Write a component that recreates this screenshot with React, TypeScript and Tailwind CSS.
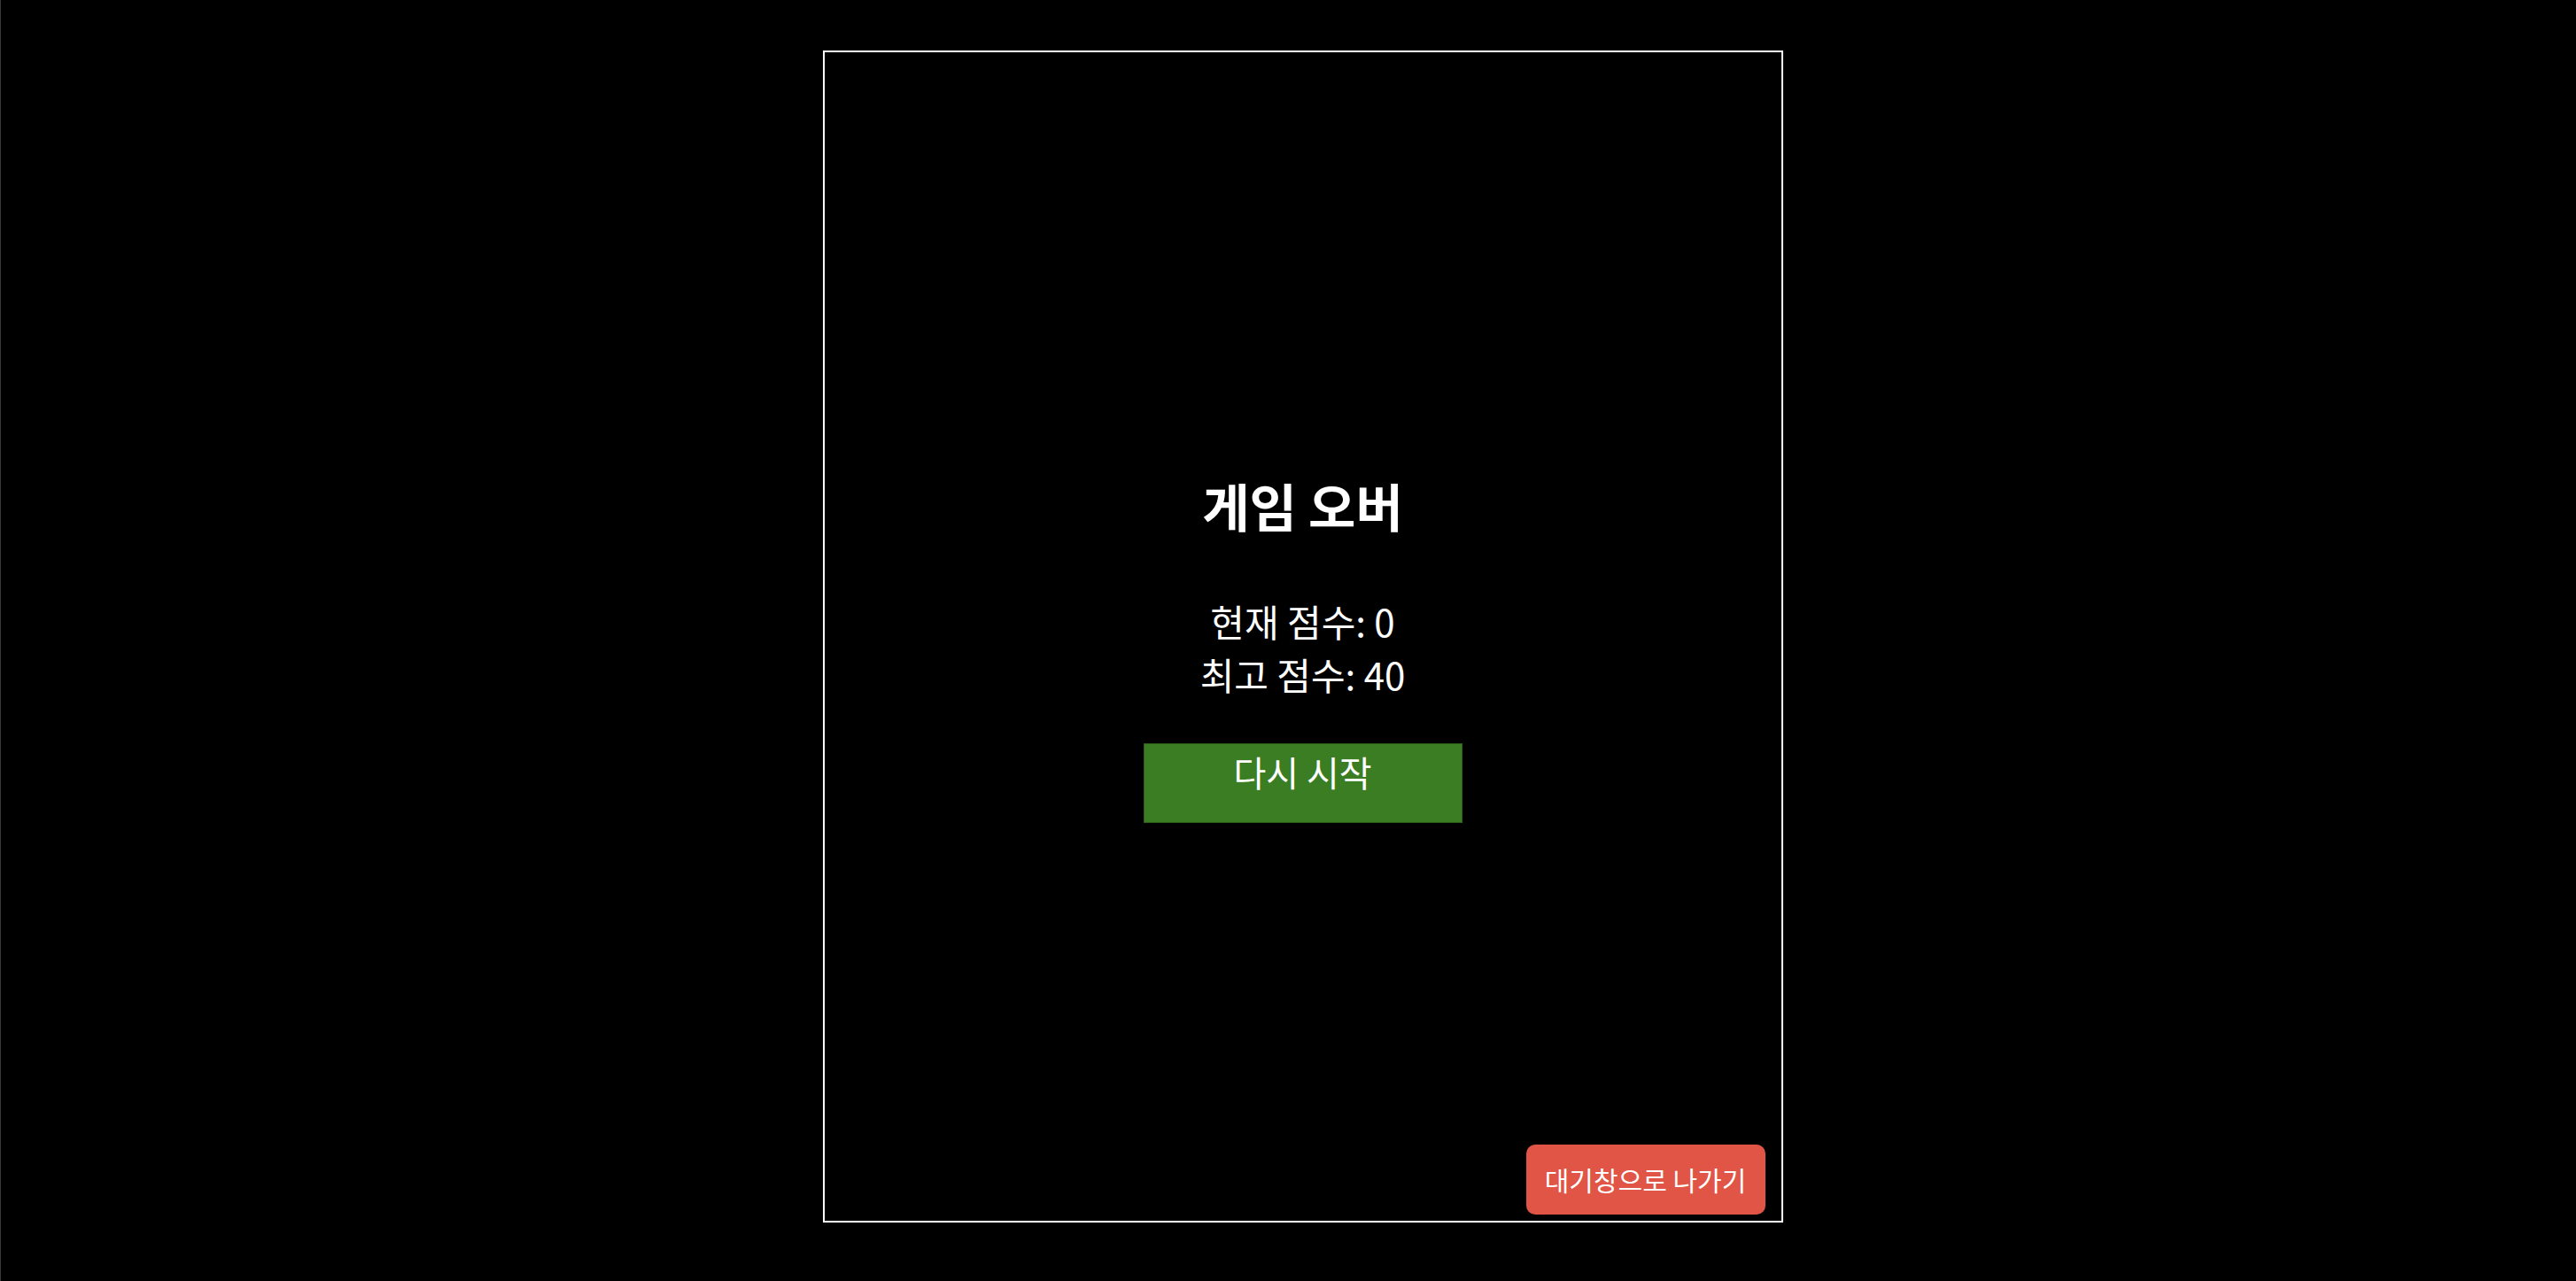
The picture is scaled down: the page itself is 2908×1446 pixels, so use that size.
export default function App() {
  const font = { fontFamily: '"Noto Sans CJK KR", "Noto Sans", sans-serif' }
  return (
    <div
      className="flex h-screen w-full justify-center bg-black pl-[32px] pt-[57px] border-l border-[#3a3a3a]"
      style={font}
    >
      <div className="relative flex h-[1323px] w-[1084px] flex-col items-center border-2 border-white text-white">
        <h1 className="mt-[468px] text-[58px] font-bold leading-[87px]">게임 오버</h1>
        <p className="mt-[57px] text-[42px] leading-[60px]">현재 점수: 0</p>
        <p className="text-[42px] leading-[60px]">최고 점수: 40</p>
        <button className="mt-[48px] flex h-[90px] w-[360px] items-start justify-center border border-[#2a5c1a] bg-[#3a7d23] pt-[5px] text-[40px] leading-[52px] text-white">
          다시 시작
        </button>
        <button className="absolute bottom-[7px] right-[18px] flex h-[79px] w-[270px] items-center justify-center rounded-[10px] bg-[#e05545] text-[30px] text-white">
          대기창으로 나가기
        </button>
      </div>
    </div>
  )
}
